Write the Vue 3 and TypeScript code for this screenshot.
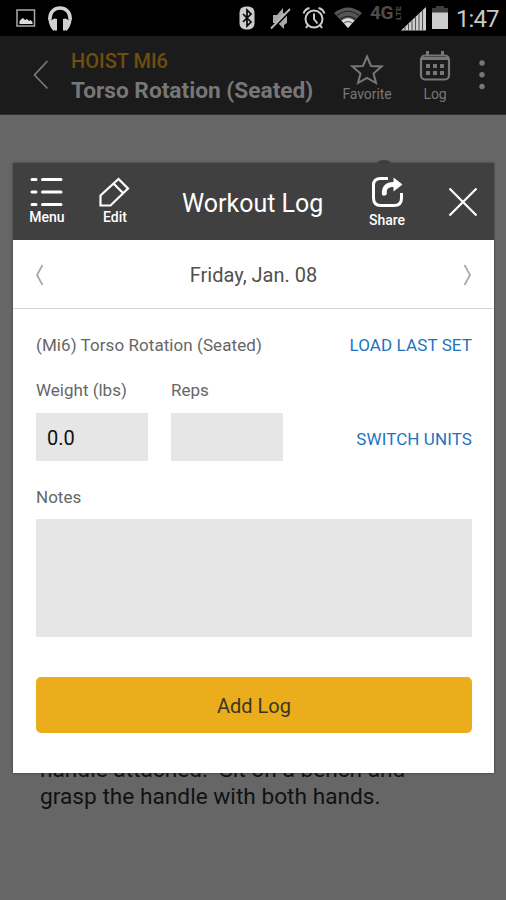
<script setup lang="ts">
import { ref } from 'vue'

const title = ref('Workout Log')
const date = ref('Friday, Jan. 08')
const weight = ref('0.0')
const reps = ref('')
const notes = ref('')
const dots: number[][] = [[10, 16], [17, 16], [24, 16], [10, 23], [17, 23], [24, 23]]
const bars: number[] = [4, 7.5, 11, 14.5, 18, 21.5]
</script>

<template>
  <div class="screen">
    <div class="status">
      <svg class="s-pic" width="20" height="18" viewBox="0 0 20 18">
        <rect x="1" y="1" width="17.5" height="16" fill="none" stroke="#aaa" stroke-width="1.5" />
        <path d="M3.5 15v-3l2-2 1.500-1 2 2 2-1 2 2 1.500-1 2 2v2z" fill="#ddd" />
      </svg>
      <svg class="s-head" width="26" height="26" viewBox="0 0 26 26">
        <path d="M3 13.500v-2a10 9.500 0 0 1 20 0v2" fill="none" stroke="#d2d2d2" stroke-width="3.600" />
        <path d="M1 11.500l3.500 2.500 3-1.500 2.500 .5v11.500H6L3.500 21 2 17zM25 11.500L21.500 14l-3-1.500-2.500 .5v11.500H20l2.500-3.500 1.500-4z" fill="#d2d2d2" />
      </svg>
      <span class="grow"></span>
      <svg class="s-bt" width="16" height="24" viewBox="0 0 16 24">
        <rect x=".5" y=".5" width="15" height="23" rx="6" fill="#ccc" />
        <path d="M4 8l8 8-4 4V4l4 4-8 8" fill="none" stroke="#050505" stroke-width="1.700" />
      </svg>
      <svg class="s-mute" width="22" height="24" viewBox="0 0 22 24">
        <path d="M3 8h4l6-7v5l4 2v8l-3 2v4l-6-6H3z" fill="#aaa" />
        <path d="M2 22.500L21 3" stroke="#000" stroke-width="2" />
        <path d="M1 21.500L20 2" stroke="#bbb" stroke-width="1.800" />
      </svg>
      <svg class="s-alarm" width="24" height="24" viewBox="0 0 24 24" fill="none" stroke="#ccc" stroke-width="2">
        <circle cx="12" cy="13" r="8.500" />
        <path d="M12 7.500V13l3.500 4.500M1.500 7.500Q3 3 7.500 2M22.500 7.500Q21 3 16.500 2M6 19l-2 3M18 19l2 3" />
      </svg>
      <svg class="s-wifi" width="28" height="22" viewBox="0 0 28 22">
        <path d="M0 6Q14-5 28 6L14 21z" fill="#555" />
        <path d="M7.500 13.500Q14 8.500 20.500 13.500L14 21z" fill="#ddd" />
        <path d="M3 8.500Q14 0 25 8.500M6 12.500Q14 6 22 12.500" fill="none" stroke="#222" stroke-width="1.100" />
        <path d="M10 16q4-3 8 0" fill="none" stroke="#777" stroke-width="1.400" />
      </svg>
      <span class="net">4G</span>
      <svg class="lte" width="8" height="16" viewBox="0 0 8 16">
        <text transform="translate(7 15) rotate(-90)" font-size="8" font-weight="700" fill="#4c4c4c" textLength="14" lengthAdjust="spacingAndGlyphs">LTE</text>
      </svg>
      <svg class="s-sig" width="26" height="24" viewBox="0 0 26 24">
        <path d="M0 23.500L25 0v23.500z" fill="#d0d0d0" />
        <path v-for="b in bars" :key="b" :d="`M${b} ${23.5 - b * 0.94}V23.5`" stroke="#555" stroke-width="1.100" />
      </svg>
      <svg class="s-bat" width="16" height="24" viewBox="0 0 16 24">
        <path d="M4 0h8v2h4v5H0V2h4z" fill="#3d3d3d" />
        <rect y="6.500" width="16" height="16.500" fill="#ccc" />
      </svg>
      <span class="time">1:47</span>
    </div>

    <div class="bar">
      <svg class="b-back" width="18" height="32" viewBox="0 0 18 32">
        <path d="M15.500 2L2.500 16l13 13.500" fill="none" stroke="#777" stroke-width="1.800" />
      </svg>
      <div class="names">
        <span class="brand">HOIST MI6</span>
        <span class="machine">Torso Rotation (Seated)</span>
      </div>
      <div class="fav">
        <svg width="34" height="32" viewBox="0 0 34 32">
          <path d="M17 3.500l4 9.500 10.500.5-8 7 2.500 9.500-9-5-9 5 2.500-9.500-8-7L13 13z" fill="none" stroke="#777" stroke-width="2" />
        </svg>
        <span>Favorite</span>
      </div>
      <div class="log">
        <svg width="34" height="32" viewBox="0 0 34 32">
          <rect x="3" y="5.500" width="28" height="24" rx="4" fill="none" stroke="#777" stroke-width="2.200" />
          <path d="M4 8.500h26M9.500 1v5M24.500 1v5" stroke="#777" stroke-width="3" />
          <rect v-for="(d, i) in dots" :key="i" :x="d[0] - 2" :y="d[1] - 2" width="4" height="4" fill="#777" />
        </svg>
        <span>Log</span>
      </div>
      <svg class="b-more" width="8" height="32" viewBox="0 0 8 32" fill="#777">
        <circle cx="4" cy="4" r="2.700" /><circle cx="4" cy="15.700" r="2.700" /><circle cx="4" cy="27.500" r="2.700" />
      </svg>
    </div>

    <div class="page">
      <p>handle attached.&nbsp; Sit on a bench and<br />grasp the handle with both hands.</p>
    </div>

    <div class="hint"></div>
    <div class="modal">
      <div class="head">
        <div class="act menu">
          <svg width="36" height="32" viewBox="0 0 36 32" stroke="#fff" stroke-width="3" stroke-linecap="round">
            <path d="M3 2.500h4M13.500 2.500H32M3 15h4M13.500 15H32M3 27.500h4M13.500 27.500H32" />
          </svg>
          <span>Menu</span>
        </div>
        <div class="act edit">
          <svg width="32" height="32" viewBox="0 0 32 32" fill="none" stroke="#fff" stroke-width="2.200">
            <path d="M2.500 28.500V18.500L20.500 2l9.500 9.500L12.500 28.500zM15.500 6.500l9.500 9.500" />
          </svg>
          <span>Edit</span>
        </div>
        <h1>{{ title }}</h1>
        <div class="act share">
          <svg width="32" height="32" viewBox="0 0 32 32">
            <path d="M17 2.500H10Q2.500 2.500 2.500 9v13q0 7.500 7.500 7.500h13q7.500 0 7.500-7.500v-5" fill="none" stroke="#fff" stroke-width="3" />
            <path d="M11 19C10 10 15 6 22.500 6V1.500L31.500 8.500l-9 7V11C17 11 15 13.500 16 18q-2.500 3-5 1z" fill="#fff" />
          </svg>
          <span>Share</span>
        </div>
        <svg class="close" width="30" height="30" viewBox="0 0 30 30">
          <path d="M1.500 1.500l27 27M28.500 1.500l-27 27" stroke="#fff" stroke-width="2.200" />
        </svg>
      </div>

      <div class="date">
        <svg width="9" height="22" viewBox="0 0 9 22" fill="none" stroke="#aaa" stroke-width="1.800"><path d="M7.500 1L2 11l5.500 10" /></svg>
        <span>{{ date }}</span>
        <svg width="9" height="22" viewBox="0 0 9 22" fill="none" stroke="#aaa" stroke-width="1.800"><path d="M1.500 1L7 11 1.500 21" /></svg>
      </div>

      <div class="form">
        <div class="line">
          <span class="lbl exercise">(Mi6) Torso Rotation (Seated)</span>
          <a class="load">LOAD LAST SET</a>
        </div>
        <div class="fields">
          <label class="field"><span class="lbl weight">Weight (lbs)</span><input v-model="weight" /></label>
          <label class="field"><span class="lbl">Reps</span><input v-model="reps" /></label>
          <a class="switch">SWITCH UNITS</a>
        </div>
        <label class="notes"><span class="lbl">Notes</span><textarea v-model="notes"></textarea></label>
        <button>Add Log</button>
      </div>
    </div>
  </div>
</template>

<style>
body { margin: 0; }
</style>

<style scoped>
* { box-sizing: border-box; }
.screen { position: relative; width: 506px; height: 900px; overflow: hidden; background: #666; font-family: Roboto, "Liberation Sans", sans-serif; display: flex; flex-direction: column; white-space: nowrap; }
.screen svg { display: block; flex: none; }
.status { height: 36px; background: #000; display: flex; align-items: flex-start; padding: 6px 7px 0 16px; flex: none; }
.s-pic { margin-top: 3px; }
.s-head { margin-left: 11px; }
.grow { flex: 1; }
.s-mute { margin-left: 15px; margin-top: 1px; }
.s-alarm { margin-left: 10px; }
.s-wifi { margin-left: 8px; margin-top: 1px; }
.net { width: 24px; margin-left: 8px; color: #4c4c4c; font-size: 19px; font-weight: 700; line-height: 14px; letter-spacing: -.5px; }
.lte { margin-top: -1px; }
.s-sig { margin-top: 1px; margin-left: -1px; }
.s-bat { margin-left: 5px; }
.time { width: 43px; margin-left: 8px; color: #c9c9c9; font-size: 24px; line-height: 26px; letter-spacing: -.9px; }
.bar { height: 79px; flex: none; background: #1b1b1b; border-bottom: 1px solid #303030; display: flex; align-items: flex-start; padding-left: 32px; }
.b-back { margin-top: 23px; }
.names { display: flex; flex-direction: column; width: 265px; margin-left: 21px; padding-top: 12px; }
.brand { color: #6f4e0e; font-size: 20px; line-height: 27px; font-weight: 500; }
.machine { color: #777; font-size: 22.700px; line-height: 31px; font-weight: 700; }
.fav, .log { display: flex; flex-direction: column; align-items: center; color: #777; font-size: 14px; line-height: 16px; padding-top: 17px; letter-spacing: -.1px; }
.fav { width: 62px; }
.fav span, .log span { margin-top: 1px; }
.log { width: 40px; margin-left: 17px; padding-top: 14px; }
.log span { margin-top: 4px; }
.b-more { margin: 23px 0 0 23px; }
.page { padding: 641px 0 0 40px; color: #111; }
.page p { margin: 0; font-size: 22.700px; line-height: 27px; }
.hint { position: absolute; left: 377px; top: 160px; width: 14px; height: 6px; border-radius: 50%; background: #404040; }
.modal { position: absolute; left: 13px; top: 163px; width: 481px; height: 610px; background: #fff; box-shadow: 0 0 2px #333; display: flex; flex-direction: column; }
.head { height: 77px; background: #404040; color: #fff; display: flex; align-items: flex-start; padding-left: 14px; flex: none; }
.act { display: flex; flex-direction: column; align-items: center; font-size: 14px; line-height: 16px; width: 40px; font-weight: 500; }
.menu { padding-top: 14px; }
.edit { margin-left: 27px; padding-top: 14px; }
.edit span { margin-left: 2px; }
.share { padding-top: 13px; margin-left: 40px; }
.share span { margin-top: 4px; }
h1 { margin: 26px 0 0 48px; width: 145px; font-size: 25px; line-height: 30px; font-weight: 400; }
.close { margin: 24px 0 0 41px; }
.date { height: 69px; flex: none; border-bottom: 1px solid #d6d6d6; display: flex; align-items: center; justify-content: space-between; padding: 2px 22px 0; color: #505050; font-size: 20px; }
.form { display: flex; flex-direction: column; padding: 25px 22px 0 23px; }
.lbl { display: block; color: #666; font-size: 17px; line-height: 22px; }
.exercise { letter-spacing: .07px; }
.line { display: flex; justify-content: space-between; }
a { color: #1d73be; font-size: 17px; line-height: 22px; letter-spacing: .1px; }
.fields { display: flex; margin-top: 23px; }
.field { width: 112px; margin-right: 23px; }
input { display: block; width: 112px; height: 48px; margin: 12px 0 0; border: 0; border-radius: 0; background: #e6e6e6; padding: 2px 11px 0; font: 20px Roboto, sans-serif; color: #111; }
.switch { margin-left: auto; margin-top: 49px; }
.notes { display: block; margin-top: 25px; }
textarea { display: block; width: 100%; height: 118px; margin-top: 11px; border: 0; resize: none; background: #e6e6e6; padding: 10px; font: 18px Roboto, sans-serif; }
button { width: 100%; height: 56px; margin-top: 40px; border: 0; border-radius: 5px; background: #ebad1c; color: #3b361f; font: 20px Roboto, sans-serif; padding-top: 2px; }
</style>
